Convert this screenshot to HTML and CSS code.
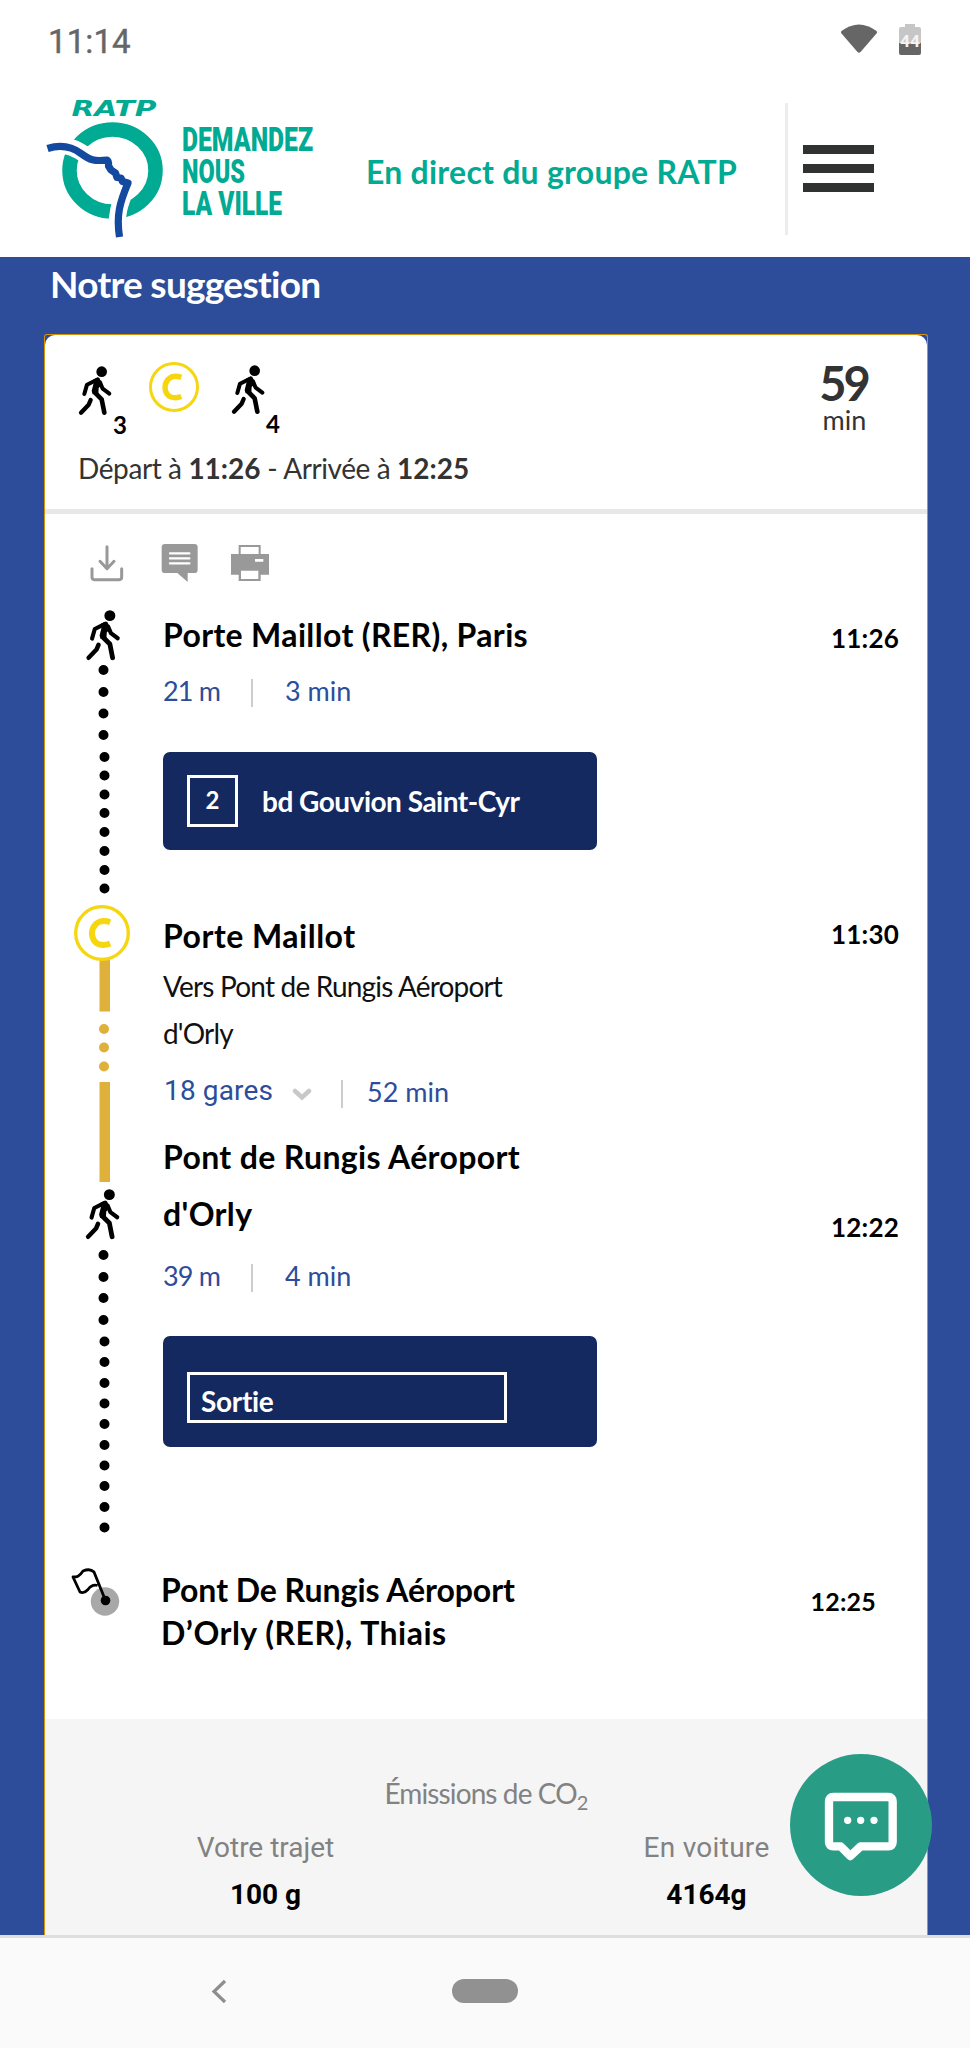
FILE: index.html
```html
<!DOCTYPE html>
<html lang="fr">
<head>
<meta charset="utf-8">
<title>Notre suggestion</title>
<link rel="stylesheet" href="styles.css">
</head>
<body>
<svg class="defs" width="0" height="0">
  <symbol id="walker" viewBox="140 136 108 156">
    <circle cx="214" cy="156" r="16"/>
    <path d="M188 180L203 173Q209 174 210 182L214 196L205 205L204 222L187 224L184 214L190 190Z"/>
    <g fill="none" stroke="#000" stroke-linecap="round" stroke-linejoin="round">
      <path stroke-width="12" d="M200 180L170 195L162 223M209 188L217 207L237 222"/>
      <path stroke-width="14" d="M194 219L214 239L222 279"/>
      <path stroke-width="13" d="M181 241L175 255L152 279"/>
    </g>
  </symbol>
  <symbol id="line-c" viewBox="0 0 50 50">
    <circle cx="25" cy="25" r="23.5" fill="#fff" stroke="#f5d60f" stroke-width="3"/>
    <path d="M32.3 15.4Q24.5 12.6 19.5 17Q16 20.5 16 25.5Q16.500 33 22 35Q27 36.600 32.300 34.400" fill="none" stroke="#f5d60f" stroke-width="5.400"/>
  </symbol>
</svg>

<div class="status">
  <span class="clock">11:14</span>
  <svg width="88" height="36" viewBox="840 20 88 36">
    <path d="M841.500 31Q859 18 876.500 31Q877.500 32 876.500 33.500L860.500 52Q859 53.500 857.500 52L841.500 33.500Q840.500 32 841.500 31Z" fill="#666"/>
    <path d="M905 24H915V27H919Q921 27 921 29V43H899V29Q899 27 901 27H905Z" fill="#c6c6c6"/>
    <path d="M899 43H921V53Q921 55 919 55H901Q899 55 899 53Z" fill="#666"/>
    <text x="900" y="47" textLength="20" lengthAdjust="spacingAndGlyphs" class="battery">44</text>
  </svg>
</div>

<header class="header">
  <svg class="logo" width="276" height="145" viewBox="44 95 276 145">
    <text class="logo-name" x="71.500" y="115.500" textLength="85" lengthAdjust="spacingAndGlyphs">RATP</text>
    <ellipse cx="112.500" cy="170.500" rx="43" ry="41" fill="none" stroke="#00aa93" stroke-width="14.500"/>
    <path d="M50 149C62 143 72 146 84 154C94 162 97 160 106 160M128 184C120 202 115 215 117.500 240" fill="none" stroke="#fff" stroke-width="17"/>
    <path d="M47.500 148.500C60 144.500 71 146 81 153.500C90 160 94 161.500 107 160Q109 161 108.500 166L111 170L115.500 173L117 177.500L121 178L122.500 181.500L128 183C120 202 116 215 119.500 237" fill="none" stroke="#1449a0" stroke-width="7.200" stroke-linejoin="round"/>
    <g class="logo-tag">
      <text x="182" y="151" textLength="131" lengthAdjust="spacingAndGlyphs">DEMANDEZ</text>
      <text x="182" y="183" textLength="63" lengthAdjust="spacingAndGlyphs">NOUS</text>
      <text x="182" y="214.500" textLength="100" lengthAdjust="spacingAndGlyphs">LA VILLE</text>
    </g>
  </svg>
  <div class="header-title">En direct du groupe RATP</div>
  <div class="header-rule"></div>
  <div class="burger"><i></i><i></i><i></i></div>
</header>

<main class="main">
  <h1 class="heading">Notre suggestion</h1>
  <section class="card">
    <div class="summary">
      <div>
        <div class="modes">
          <div class="walk"><svg width="36" height="52"><use href="#walker"/></svg><b>3</b></div>
          <svg class="mode-c" width="50" height="50"><use href="#line-c"/></svg>
          <div class="walk second"><svg width="36" height="52"><use href="#walker"/></svg><b>4</b></div>
        </div>
        <p class="hours">Départ à <b>11:26</b> - Arrivée à <b>12:25</b></p>
      </div>
      <div class="duration"><b>59</b><span>min</span></div>
    </div>
    <div class="tools">
      <svg width="38" height="38" viewBox="174 672 114 114" fill="none" stroke="#999" stroke-width="9" stroke-linecap="round" stroke-linejoin="round"><path d="M231 680V745M210 724L231 746L252 724M186 746V772Q186 779 193 779H268Q275 779 275 772V746"/></svg>
      <svg width="38" height="38" viewBox="393 672 114 114"><path d="M405 672H493Q503 672 503 682V749Q503 759 493 759H473V786L442 759H405Q395 759 395 749V682Q395 672 405 672Z" fill="#999"/><path d="M420 700H478M420 715H478M420 730H478" stroke="#fff" stroke-width="7" stroke-linecap="round"/></svg>
      <svg width="38" height="38" viewBox="603 672 114 114"><path d="M603 702H717V764H692V783H626V764H603ZM626 675H692V702H626Z" fill="#999"/><path d="M632 681H686V702H632ZM633 752H685V777H633ZM675 717H700V725H675Z" fill="#fff"/></svg>
    </div>

    <div class="step step-walk">
      <svg width="118" height="301" viewBox="45 604 118 301">
        <use href="#walker" x="84.500" y="608.500" width="37" height="54"/>
        <path class="dots" d="M103.500 670v0M103.500 692v0M103.500 713.500v0M103.500 735v0M104.500 757v0M104.500 775.500v0M104.500 794.500v0M104.500 813v0M104.500 832v0M104.500 851v0M104.500 870v0M104.500 888.500v0"/>
      </svg>
      <div class="content">
        <h2>Porte Maillot (RER), Paris</h2>
        <div class="meta"><span class="distance">21 m</span><i></i><span>3 min</span></div>
        <div class="exit"><b class="number">2</b><b class="street">bd Gouvion Saint-Cyr</b></div>
      </div>
      <time>11:26</time>
    </div>

    <div class="step step-train">
      <svg width="118" height="215" viewBox="45 905 118 215">
        <path d="M99.500 958H110V1011.500H99.500ZM99.500 1082H110V1120H99.500Z" fill="#dfb03a"/>
        <use href="#line-c" x="74" y="905" width="56" height="56"/>
        <path class="dots gold" d="M104 1029v0M104 1047.500v0M104 1066.500v0"/>
      </svg>
      <div class="content">
        <h2 class="airy">Porte Maillot</h2>
        <p class="direction">Vers Pont de Rungis Aéroport<br>d'Orly</p>
        <div class="meta"><span class="stops">18 gares</span><svg width="20" height="14" viewBox="292 1087 20 14"><path d="M295 1091L302 1097.500L309 1091" fill="none" stroke="#c8c8c8" stroke-width="4.500" stroke-linecap="round"/></svg><i></i><span>52 min</span></div>
      </div>
      <time>11:30</time>
    </div>

    <div class="step step-last-walk">
      <svg width="118" height="440" viewBox="45 1120 118 440">
        <path d="M99.500 1120H110V1182H99.500Z" fill="#dfb03a"/>
        <use href="#walker" x="84" y="1187.500" width="37" height="54"/>
        <path class="dots" d="M103.500 1255v0M103.500 1277v0M103.500 1298v0M103.500 1320v0M104.500 1341.500v0M104.500 1362v0M104.500 1383v0M104.500 1403.500v0M104.500 1424v0M104.500 1445v0M104.500 1465.500v0M104.500 1486v0M104.500 1507v0M104.500 1527.500v0"/>
      </svg>
      <div class="content">
        <h2 class="loose">Pont de Rungis Aéroport<br>d'Orly</h2>
        <div class="meta"><span class="distance">39 m</span><i></i><span>4 min</span></div>
        <div class="exit exit-tall"><b class="sortie">Sortie</b></div>
      </div>
      <time>12:22</time>
    </div>

    <div class="step step-end">
      <svg width="118" height="159" viewBox="45 1560 118 159">
        <circle cx="105" cy="1601.500" r="14.200" fill="#a8a8a8"/>
        <path d="M105.500 1600.500L94 1572Q90 1568 83 1571C79 1577 77 1577 73 1577L80 1592Q84 1594 88 1589.500Q92 1584 97.500 1585.500" fill="none" stroke="#000" stroke-width="2.800" stroke-linejoin="round"/>
        <circle cx="105.500" cy="1600.500" r="4.800"/>
      </svg>
      <div class="content">
        <h2 class="final">Pont De Rungis Aéroport<br><span>D’Orly (RER), Thiais</span></h2>
      </div>
      <time>12:25</time>
    </div>

    <div class="emissions">
      <h3>Émissions de CO<sub>2</sub></h3>
      <div class="compare">
        <div><span>Votre trajet</span><b>100 g</b></div>
        <div><span class="car">En voiture</span><b>4164g</b></div>
      </div>
    </div>
  </section>
  <div class="chat">
    <svg width="75" height="70" viewBox="1020 277 225 210" fill="none" stroke="#fff" stroke-width="25" stroke-linejoin="round"><path d="M1048 292H1213Q1226 292 1226 305V427Q1226 440 1213 440H1130L1099 469L1070 440H1048Q1035 440 1035 427V305Q1035 292 1048 292Z"/><path d="M1091 362v0M1130 362v0M1170 362v0" stroke-width="22" stroke-linecap="round"/></svg>
  </div>
</main>

<nav class="navbar">
  <svg width="18" height="26" viewBox="210 1979 18 26"><path d="M225 1981L214 1991.500L225 2002" fill="none" stroke="#8e8e8e" stroke-width="3.200"/></svg>
  <div class="pill"></div>
</nav>
</body>
</html>
```
FILE: styles.css
```css
* { box-sizing: border-box; }
body {
  margin: 0; width: 970px; height: 2048px; overflow: hidden;
  display: flex; flex-direction: column;
  background: #fff; color: #000; font-family: Lato, sans-serif;
}
h1, h2, h3, p { margin: 0; white-space: nowrap; }
span { white-space: nowrap; }
.defs { display: block; flex: none; height: 0; }

.status { height: 80px; padding: 20px 42px 0 48px; display: flex; justify-content: space-between; }
.clock { font: 400 33px/44px Roboto, sans-serif; letter-spacing: 0.1px; color: #666; -webkit-text-stroke: 0.4px #666; }
.battery { font: 700 17px Roboto, sans-serif; fill: #f4f4f4; }

.header { height: 177px; padding: 15px 0 0 44px; display: flex; align-items: flex-start; }
.logo { flex: none; }
.logo-name { font: italic 700 21px "DejaVu Sans", sans-serif; fill: #00aa93; }
.logo-tag { font: 900 34px Roboto, sans-serif; fill: #00aa93; }
.header-title { margin: 57px 0 0 46px; width: 419px; font-weight: 700; font-size: 32px; line-height: 40px; letter-spacing: 0.24px; white-space: nowrap; color: #00aa93; }
.header-rule { width: 3px; height: 132px; margin-top: 8px; background: #ececec; }
.burger { margin: 50px 0 0 15px; width: 71px; height: 47px; display: flex; flex-direction: column; justify-content: space-between; }
.burger i { height: 9px; background: #303231; }

.main { position: relative; height: 1678px; overflow: hidden; background: #2d4c9a; }
.heading { height: 77px; padding: 5px 0 0 50px; font-size: 37px; line-height: 44px; letter-spacing: -0.710px; color: #fff; }
.card { margin: 0 42px 0 44px; border: 1px solid #d99208; border-bottom: 0; border-radius: 3px 3px 0 0; }
.summary { height: 179px; display: flex; justify-content: space-between; background: #fff; border-bottom: 5px solid #e8e8e8; border-radius: 10px 10px 0 0; padding: 0 32px 0 32px; color: #333; }
.modes { display: flex; height: 116px; padding-top: 30px; align-items: flex-start; color: #000; }
.walk { display: flex; width: 72px; }
.walk b { margin-top: 48px; font-size: 24px; line-height: 24px; }
.walk.second { margin: -1px 0 0 31px; }
.mode-c { margin-top: -3px; }
.hours { padding-left: 1px; font-size: 28px; line-height: 34px; letter-spacing: -0.4px; }
.hours b { letter-spacing: 0; }
.duration { width: 100px; padding-top: 26px; display: flex; flex-direction: column; align-items: center; }
.duration b { margin-right: 3px; font-size: 47px; line-height: 44px; letter-spacing: -3px; }
.duration span { margin-right: 1px; font-size: 27px; line-height: 30px; }
.tools { height: 90px; padding: 30px 0 0 43px; display: flex; background: #fff; }
.tools svg + svg { margin-left: 35px; }
.tools svg + svg + svg { margin-left: 32px; }

.step { display: grid; grid-template-columns: 118px 1fr 105px; background: #fff; }
.step > svg { display: block; }
.dots { fill: none; stroke: #000; stroke-width: 10px; stroke-linecap: round; }
.gold { stroke: #dfb03a; }
.content { padding-top: 11px; }
.content h2 { height: 40px; font-size: 32px; line-height: 40px; letter-spacing: 0.350px; }
.content .airy { letter-spacing: 0.5px; }
.step-last-walk .content, .step-end .content { padding-top: 9px; }
.content .loose { height: 113px; line-height: 56.500px; }
.content .final { height: auto; line-height: 42.700px; letter-spacing: -0.040px; margin-left: -2px; }
.final span { letter-spacing: 0.500px; }
.direction { margin-top: 7px; font-size: 28px; line-height: 46.500px; letter-spacing: -0.810px; color: #111; }
.meta { display: flex; align-items: flex-start; height: 28px; margin-top: 24px; font-size: 27px; line-height: 24px; color: #2d4c9a; }
.loose + .meta { margin-top: 22px; }
.distance { width: 88px; letter-spacing: -0.860px; }
.meta i { width: 2px; height: 28px; margin-right: 32px; background: #ccc; }
.stops { width: 129px; padding-left: 1px; font: 28px/22px Roboto, sans-serif; letter-spacing: 0.140px; }
.meta svg { margin: 7px 29px 0 0; }
.meta svg + i { margin-right: 24px; }
.exit { display: flex; align-items: flex-start; width: 434px; height: 98px; margin-top: 45px; padding: 23px 24px 0; background: #142960; border-radius: 7px; color: #fff; font-size: 28px; }
.number { width: 51px; height: 52px; border: 3px solid #fff; font-size: 24px; line-height: 44px; text-align: center; }
.street { margin-left: 24px; line-height: 52px; letter-spacing: -0.500px; white-space: nowrap; }
.exit-tall { height: 111px; margin-top: 44px; padding-top: 36px; }
.sortie { width: 320px; height: 51px; border: 3px solid #fff; padding-left: 11px; line-height: 52px; letter-spacing: -0.300px; }
time { justify-self: end; margin-right: 28px; font-weight: 700; font-size: 26px; line-height: 30px; letter-spacing: 0.200px; }
.step-walk time { margin-top: 19px; }
.step-train time { margin-top: 14px; }
.step-last-walk time { margin-top: 92px; }
.step-end time { margin: 26px 51px 0 0; font-size: 25px; }

.emissions { height: 217px; padding-top: 57px; background: #f5f5f5; color: #828282; }
.emissions h3 { height: 55px; font-weight: 400; font-size: 28px; line-height: 34px; letter-spacing: -0.890px; text-align: center; }
.emissions sub { font-size: 20px; line-height: 0; vertical-align: -6px; }
.compare { display: grid; grid-template-columns: 1fr 1fr; font: 28px/34px Roboto, sans-serif; }
.compare > div { display: flex; flex-direction: column; align-items: center; }
.compare b { margin-top: 13px; color: #000; }
.car { letter-spacing: 0.290px; }
.chat { position: absolute; left: 790px; top: 1497px; width: 142px; height: 142px; border-radius: 50%; background: #299c86; padding: 38px 0 0 34px; }

.navbar { height: 113px; padding: 41px 0 0 210px; border-top: 3px solid #dedede; background: #fafafa; display: flex; align-items: flex-start; }
.pill { width: 66px; height: 24px; margin: 0 0 0 224px; border-radius: 12px; background: #919191; }
```
